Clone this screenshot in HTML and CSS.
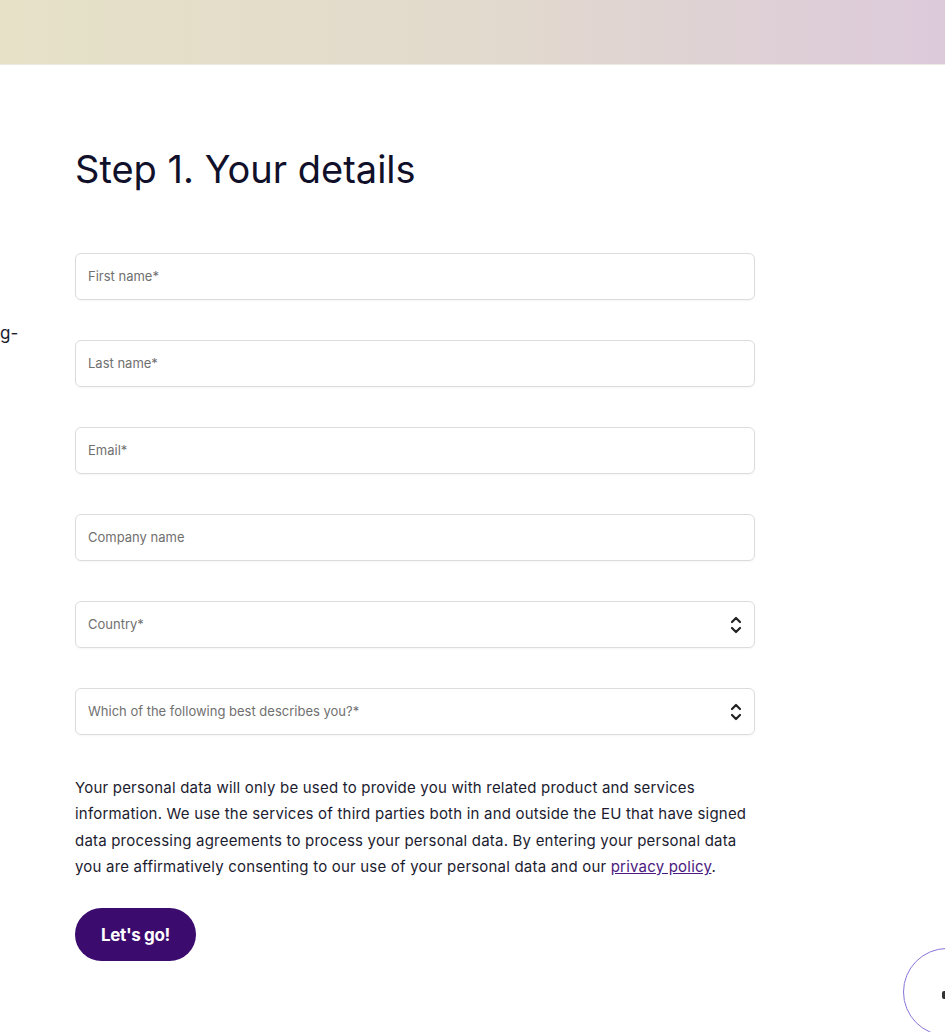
FILE: index.html
```html
<!DOCTYPE html>
<html lang="en">
<head>
<meta charset="utf-8">
<title>Step 1. Your details</title>
<link rel="stylesheet" href="styles.css">
</head>
<body>
<header class="banner"></header>
<div class="page">
  <aside class="side"><span class="side-text">g-</span></aside>
  <main class="content">
    <h1 class="title">Step 1. Your details</h1>
    <form class="form">
      <div class="field"><span class="ph">First name*</span></div>
      <div class="field"><span class="ph">Last name*</span></div>
      <div class="field"><span class="ph">Email*</span></div>
      <div class="field"><span class="ph">Company name</span></div>
      <div class="field select"><span class="ph">Country*</span>
        <svg class="arrows" width="12" height="22" viewBox="0 0 12 22"><path d="M2 8 L6 4 L10 8" fill="none" stroke="#222" stroke-width="2.2" stroke-linecap="round" stroke-linejoin="round"/><path d="M2 14 L6 18 L10 14" fill="none" stroke="#222" stroke-width="2.2" stroke-linecap="round" stroke-linejoin="round"/></svg>
      </div>
      <div class="field select"><span class="ph">Which of the following best describes you?*</span>
        <svg class="arrows" width="12" height="22" viewBox="0 0 12 22"><path d="M2 8 L6 4 L10 8" fill="none" stroke="#222" stroke-width="2.2" stroke-linecap="round" stroke-linejoin="round"/><path d="M2 14 L6 18 L10 14" fill="none" stroke="#222" stroke-width="2.2" stroke-linecap="round" stroke-linejoin="round"/></svg>
      </div>
    </form>
    <p class="consent">Your personal data will only be used to provide you with related product and services information. We use the services of third parties both in and outside the EU that have signed data processing agreements to process your personal data. By entering your personal data you are affirmatively consenting to our use of your personal data and our <a href="#" class="link">privacy policy</a>.</p>
    <button class="btn" type="button">Let's go!</button>
  </main>
</div>
<div class="chat"><span class="chat-dot"></span></div>
</body>
</html>
```
FILE: styles.css
```css
html, body {
  margin: 0;
  padding: 0;
  background: #fff;
}
body {
  font-family: Inter, "Noto Sans", sans-serif;
  color: #14142b;
  width: 945px;
  height: 1032px;
  overflow: hidden;
  position: relative;
}
.banner {
  height: 64px;
  background: linear-gradient(90deg, #e6e1c7 0%, #e2dacd 50%, #dccadb 100%);
  border-bottom: 1px solid #ece9e4;
}
.page {
  display: flex;
}
.side {
  width: 75px;
  flex: none;
  padding-top: 258px;
}
.side-text {
  font-size: 17px;
  color: #1a1a2e;
}
.content {
  width: 680px;
  padding-top: 78px;
}
.title {
  margin: 0;
  font-size: 38px;
  font-weight: 400;
  letter-spacing: 0;
  line-height: 52px;
  color: #10102a;
}
.form {
  margin-top: 58px;
  display: flex;
  flex-direction: column;
  gap: 40px;
}
.field {
  height: 45px;
  border: 1px solid #dcdcdc;
  border-radius: 6px;
  display: flex;
  align-items: center;
  padding: 0 12px;
  box-shadow: 0 1px 2px rgba(0,0,0,0.04);
}
.ph {
  font-size: 13px;
  color: #707070;
  letter-spacing: 0;
  flex: 1;
  margin-top: -1px;
}
.consent {
  margin: 40px 0 0;
  font-size: 15px;
  line-height: 26.3px;
  letter-spacing: 0.2px;
  color: #1c1c30;
}
.link {
  color: #4b1a7e;
  text-decoration: underline;
}
.btn {
  margin-top: 28px;
  height: 53px;
  width: 121px;
  border: none;
  border-radius: 27px;
  background: #3b0b6e;
  color: #fff;
  font-family: Inter, "Noto Sans", sans-serif;
  font-size: 17px;
  font-weight: 700;
  letter-spacing: -0.02em;
  cursor: pointer;
}
.chat {
  position: absolute;
  left: 903px;
  top: 948px;
  width: 86px;
  height: 86px;
  border: 1.5px solid #8b74d6;
  border-radius: 50%;
  background: #fff;
}
.chat-dot {
  position: absolute;
  left: 38px;
  top: 42px;
  width: 6px;
  height: 8px;
  border-radius: 2px;
  background: #333;
}
```
